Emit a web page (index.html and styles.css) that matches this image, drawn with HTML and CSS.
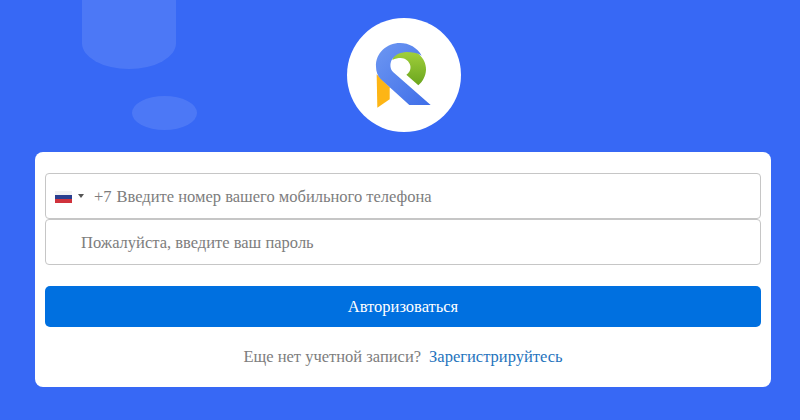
FILE: index.html
```html
<!DOCTYPE html>
<html lang="ru">
<head>
<meta charset="utf-8">
<title>Авторизоваться</title>
<link rel="stylesheet" href="styles.css">
</head>
<body>
<div class="deco deco-column"></div>
<div class="deco deco-oval"></div>
<main class="page">
  <div class="logo">
    <svg width="130" height="130" viewBox="0 0 390 390" aria-hidden="true">
      <defs>
        <linearGradient id="blue" x1="0" y1="0" x2="1" y2="1">
          <stop offset="0" stop-color="#6d97f2"/>
          <stop offset="1" stop-color="#3f6ee8"/>
        </linearGradient>
        <linearGradient id="green" x1="0" y1="0" x2="0" y2="1">
          <stop offset="0" stop-color="#a3d13c"/>
          <stop offset="1" stop-color="#6aa51e"/>
        </linearGradient>
      </defs>
      <path fill="#fdb515" d="M110 193 L149 232 L149 268 L112 293 Z"/>
      <path fill="url(#green)" d="M160 140 C178 120 205 118 225 125 C248 136 259 160 258 180 C257 198 248 215 235 226 L199 194 C208 188 213 178 211 167 C208 154 196 144 182 144 C174 144 166 146 157 150 Z"/>
      <path fill="url(#blue)" d="M108 170 C106 130 140 99 180 99 C207 99 232 113 245 137 C232 128 215 126 200 126 C180 127 165 134 155 150 C149 162 150 178 160 187 L272 285 L208 285 L122 207 C113 197 108 185 108 170 Z"/>
    </svg>
  </div>
  <form class="card">
    <div class="fields">
      <div class="field">
        <span class="flag"><i class="flag-white"></i><i class="flag-blue"></i><i class="flag-red"></i></span>
        <span class="caret"></span>
        <span class="prefix">+7</span>
        <span class="placeholder">Введите номер вашего мобильного телефона</span>
      </div>
      <div class="field field-password">
        <span class="placeholder">Пожалуйста, введите ваш пароль</span>
      </div>
    </div>
    <button class="submit" type="button">Авторизоваться</button>
    <p class="signup">
      <span>Еще нет учетной записи?</span>
      <a class="signup-link" href="#">Зарегистрируйтесь</a>
    </p>
  </form>
</main>
</body>
</html>
```

FILE: styles.css
```css
* { box-sizing: border-box; }
html, body { margin: 0; height: 100%; }
body {
  position: relative;
  overflow: hidden;
  background: #3768f5;
  font-family: "Liberation Serif", "Times New Roman", serif;
  font-size: 16.5px;
  color: #7d7d7d;
}
.deco { position: absolute; background: rgba(255, 255, 255, 0.11); }
.deco-column {
  left: 82px;
  top: -40px;
  width: 94px;
  height: 109px;
  border-radius: 0 0 47px 47px / 0 0 26px 26px;
}
.deco-oval {
  left: 132px;
  top: 96px;
  width: 65px;
  height: 34px;
  border-radius: 50%;
}
.page {
  position: relative;
  display: flex;
  flex-direction: column;
  align-items: center;
  padding: 18px 29px 0 35px;
}
.logo {
  width: 114px;
  height: 114px;
  margin-left: 1px;
  border-radius: 50%;
  background: #fff;
  display: flex;
  align-items: center;
  justify-content: center;
  overflow: hidden;
  margin-bottom: 20px;
}
.logo svg { flex: none; margin-left: 3px; }
.card {
  width: 736px;
  height: 235px;
  background: #fff;
  border-radius: 8px;
  padding: 21px 10px 0;
}
.fields { display: flex; flex-direction: column; gap: 0; }
.field {
  height: 46px;
  border: 1px solid #c6c6c6;
  border-radius: 4px;
  display: flex;
  align-items: center;
  padding-left: 9px;
}
.field-password { padding-left: 35px; }
.placeholder { position: relative; top: 1px; }
.flag {
  width: 17px;
  height: 12px;
  display: flex;
  flex-direction: column;
  margin-top: 1px;
}
.flag i { display: block; flex: 1; }
.flag-white { background: #f2f2f2; }
.flag-blue { background: #2a3f8f; }
.flag-red { background: #d0323c; }
.caret {
  width: 0;
  height: 0;
  margin-left: 6px;
  border-left: 3px solid transparent;
  border-right: 3px solid transparent;
  border-top: 4px solid #555;
}
.prefix { position: relative; top: 1px; margin-left: 10px; margin-right: 5px; }
.submit {
  display: block;
  width: 100%;
  height: 41px;
  margin-top: 21px;
  border: 0;
  border-radius: 5px;
  background: #0070e0;
  color: #fff;
  font: inherit;
}
.signup {
  margin: 20px 0 0;
  display: flex;
  justify-content: center;
  gap: 8px;
  line-height: 20px;
}
.signup-link { color: #1f74bd; text-decoration: none; }
```
